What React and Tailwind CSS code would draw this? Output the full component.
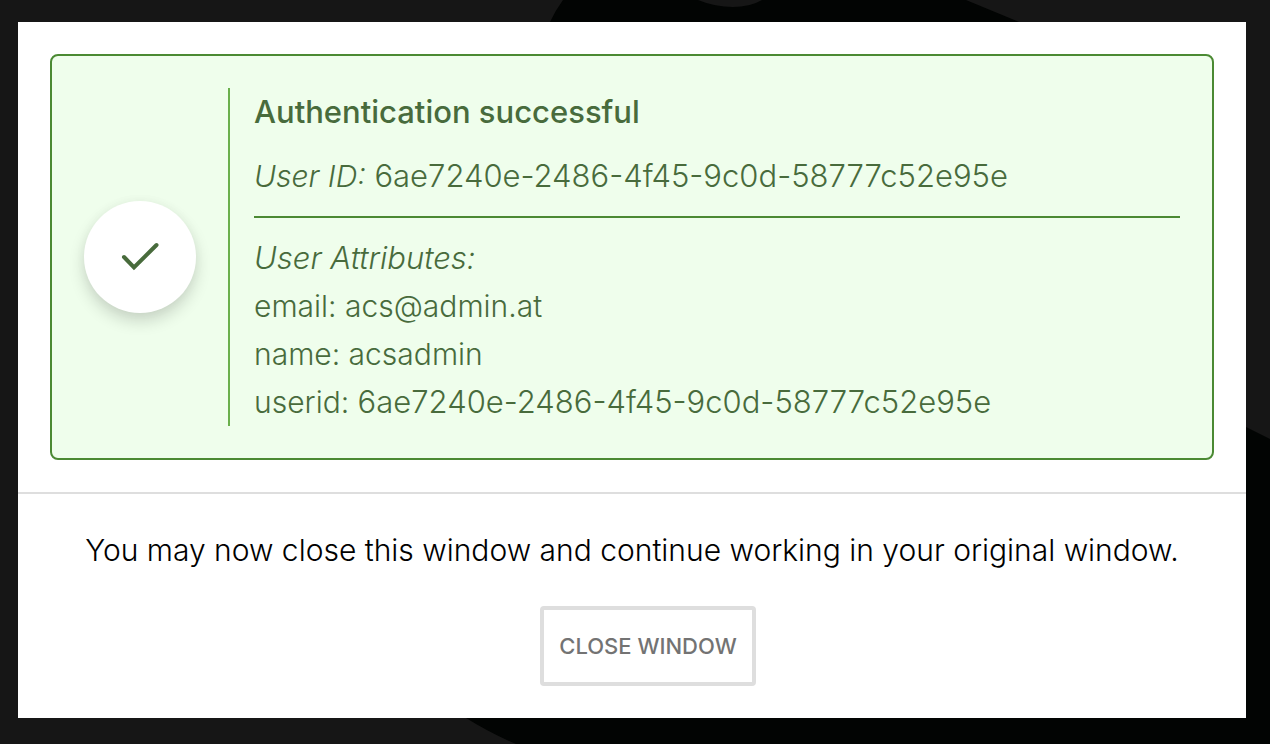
import React from "react";

const userId = "6ae7240e-2486-4f45-9c0d-58777c52e95e";

const attributes = [
  { name: "email", value: "acs@admin.at" },
  { name: "name", value: "acsadmin" },
  { name: "userid", value: userId, isId: true },
];

function Backdrop() {
  return (
    <svg
      className="absolute inset-0 -z-10 h-full w-full"
      viewBox="0 0 1270 744"
      preserveAspectRatio="none"
      aria-hidden="true"
    >
      <path
        fill="#020403"
        d="M563 0 Q555 11 550 22 C510 240 420 560 466 718 Q490 733 516 744 H1270 V439 L1246 427 L1130 120 L1019 22 L966 0 H762 Q750 7 733 7 Q715 7 698 0 Z"
      />
    </svg>
  );
}

function CheckBadge() {
  return (
    <div className="flex size-28 shrink-0 items-center justify-center self-center rounded-full bg-white shadow-[0_8px_16px_rgba(3,3,3,0.16),0_0_12px_rgba(3,3,3,0.03)]">
      <svg
        className="size-12"
        viewBox="0 0 48 48"
        fill="none"
        stroke="#486b3c"
        strokeWidth="4"
        strokeLinecap="round"
        strokeLinejoin="miter"
        aria-hidden="true"
      >
        <path d="M8 24 L18 34.5 L40.5 12" />
      </svg>
    </div>
  );
}

export default function App() {
  return (
    <div className="relative isolate min-h-screen bg-[#161616] pt-[22px] pr-6 pb-[26px] pl-[18px] font-['Inter','Liberation_Sans',sans-serif] text-[30px] leading-[48px] font-light">
      <Backdrop />
      <main className="bg-white">
        <div className="p-8">
          <section className="flex rounded-lg border-2 border-[#4b8a33] bg-[#effeec] p-8 text-[#486b3c]">
            <CheckBadge />
            <div className="ml-8 min-w-0 flex-1 border-l-2 border-[#6ab04c] pl-6">
              <h1 className="mb-4 text-[31px] font-medium">Authentication successful</h1>
              <p className="text-[31px] wrap-anywhere">
                <em className="text-[30px] leading-none">User ID:</em> {userId}
              </p>
              <hr className="my-4 border-t-2 border-[#4b8a33]" />
              <p className="text-[31px]">
                <em>User Attributes:</em>
              </p>
              <ul>
                {attributes.map((attribute) => (
                  <li key={attribute.name} className="wrap-anywhere">
                    {attribute.name}:{" "}
                    <span className={attribute.isId ? "text-[31px] leading-none" : undefined}>
                      {attribute.value}
                    </span>
                  </li>
                ))}
              </ul>
            </div>
          </section>
        </div>
        <footer className="flex flex-col items-center gap-8 border-t-2 border-[#dedede] p-8 text-center">
          <p className="text-black">
            You may now close this window and continue working in your original window.
          </p>
          <button
            type="button"
            className="ml-8 h-20 rounded border-4 border-[#dedede] bg-white px-[15px] text-[22px] leading-8 font-medium text-[#737373] uppercase"
          >
            Close window
          </button>
        </footer>
      </main>
    </div>
  );
}
